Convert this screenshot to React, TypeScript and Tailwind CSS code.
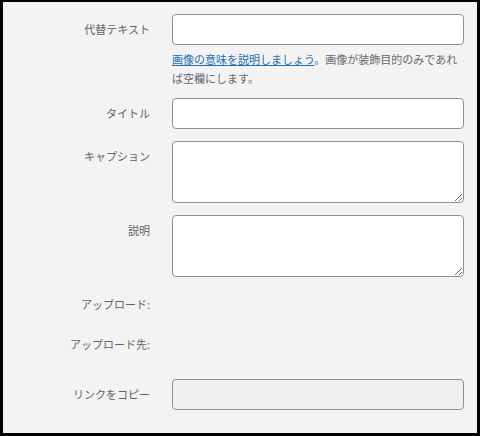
import React from 'react';

const labelClass =
  'w-[147px] shrink-0 pt-[7px] text-right text-[11px] leading-[16px] text-[#5f646a]';
const fieldBase =
  'block w-[292px] rounded-[4px] border px-2 text-[11px] text-[#2c3338] outline-none';
const fieldClass = `${fieldBase} border-[#8c8f94] bg-white`;

const Row: React.FC<{ label: string; className?: string; children?: React.ReactNode }> = ({
  label,
  className = '',
  children,
}) => (
  <div className={`flex items-start ${className}`}>
    <label className={labelClass}>{label}</label>
    <div className="ml-[22px]">{children}</div>
  </div>
);

const App: React.FC = () => {
  return (
    <div
      className="h-[436px] w-[480px] border-b-[3px] border-l-[3px] border-r-[3px] border-t-2 border-black bg-[#f3f3f3] pt-[12px]"
      style={{ fontFamily: '"Noto Sans CJK JP", "Noto Sans", sans-serif' }}
    >
      <Row label="代替テキスト">
        <input type="text" className={`${fieldClass} h-[31px]`} />
        <p className="mt-[5px] w-[292px] text-[11px] leading-[19px] text-[#646970]">
          <a href="#" className="text-[#2271b1] underline">
            画像の意味を説明しましょう
          </a>
          。画像が装飾目的のみであれば空欄にします。
        </p>
      </Row>

      <Row label="タイトル" className="mt-[10px]">
        <input type="text" className={`${fieldClass} h-[31px]`} />
      </Row>

      <Row label="キャプション" className="mt-[12px]">
        <textarea className={`${fieldClass} h-[62px] py-1`} />
      </Row>

      <Row label="説明" className="mt-[12px]">
        <textarea className={`${fieldClass} h-[62px] py-1`} />
      </Row>

      <Row label="アップロード:" className="mt-[12px] h-[28px]" />

      <Row label="アップロード先:" className="mt-[12px] h-[28px]" />

      <Row label="リンクをコピー" className="mt-[22px]">
        <input
          type="text"
          readOnly
          className={`${fieldBase} h-[31px] border-[#8c8f94] bg-[#f0f0f1]`}
        />
      </Row>
    </div>
  );
};

export default App;
